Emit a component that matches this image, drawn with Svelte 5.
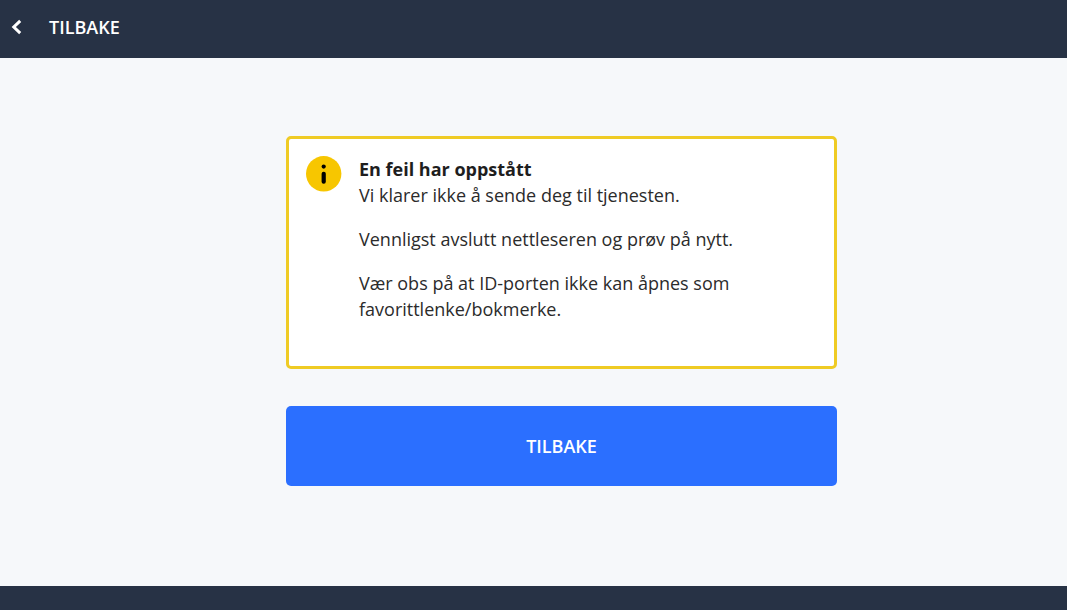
<script>
	let title = "En feil har oppstått";
	let messages = [
		"Vi klarer ikke å sende deg til tjenesten.",
		"Vennligst avslutt nettleseren og prøv på nytt.",
		"Vær obs på at ID-porten ikke kan åpnes som favorittlenke/bokmerke."
	];

	function goBack() {
		window.history.back();
	}
</script>

<div class="page">
	<header>
		<button class="back" onclick={goBack}>
			<svg width="12" height="16" viewBox="0 0 12 16" aria-hidden="true">
				<path d="M9.2 1.9 L2.8 8 L9.2 14.1" />
			</svg>
			<span>TILBAKE</span>
		</button>
	</header>

	<main>
		<div class="content">
			<section class="alert" role="alert">
				<svg class="info" width="36" height="36" viewBox="0 0 36 36" aria-hidden="true">
					<circle cx="17.7" cy="17.8" r="17.7" fill="#f7c600" />
					<circle cx="17.7" cy="10.6" r="2.1" />
					<rect x="15.6" y="15.8" width="4.2" height="12" rx="2" />
				</svg>
				<div class="text">
					<h1>{title}</h1>
					{#each messages as message}
						<p>{message}</p>
					{/each}
				</div>
			</section>

			<button class="primary" onclick={goBack}>TILBAKE</button>
		</div>
	</main>

	<footer></footer>
</div>

<style>
	:global(body) {
		margin: 0;
	}

	.page {
		display: flex;
		flex-direction: column;
		min-height: 100vh;
		font-family: "Open Sans", "Noto Sans", sans-serif;
		font-size: 18px;
		line-height: 26px;
		color: #2b2b2b;
		background: #f6f8fa;
	}

	header {
		display: flex;
		height: 58px;
		background: #273245;
	}

	button {
		border: none;
		font-family: inherit;
		font-size: 18px;
		font-weight: 600;
		line-height: 26px;
		color: #fff;
		cursor: pointer;
	}

	.back {
		display: flex;
		align-items: center;
		gap: 26px;
		padding: 0 11px 5px;
		background: none;
	}

	.back path {
		fill: none;
		stroke: #fff;
		stroke-width: 3;
	}

	main {
		flex: 1;
		padding: 78px 16px 78px 72px;
	}

	.content {
		max-width: 551px;
		margin: 0 auto;
	}

	.alert {
		display: flex;
		gap: 17px;
		align-items: flex-start;
		box-sizing: border-box;
		padding: 17px 17px 26px;
		border: 3px solid #efcb24;
		border-radius: 5px;
		background: #fff;
	}

	.info {
		flex: none;
	}

	h1 {
		margin: 0;
		font-size: 18px;
		font-weight: 700;
		line-height: 26px;
		color: #1e1e1e;
	}

	p {
		margin: 0 0 18px;
	}

	.primary {
		display: block;
		width: 100%;
		height: 80px;
		margin-top: 37px;
		border-radius: 5px;
		background: #2b6fff;
	}

	footer {
		height: 24px;
		background: #273245;
	}
</style>
